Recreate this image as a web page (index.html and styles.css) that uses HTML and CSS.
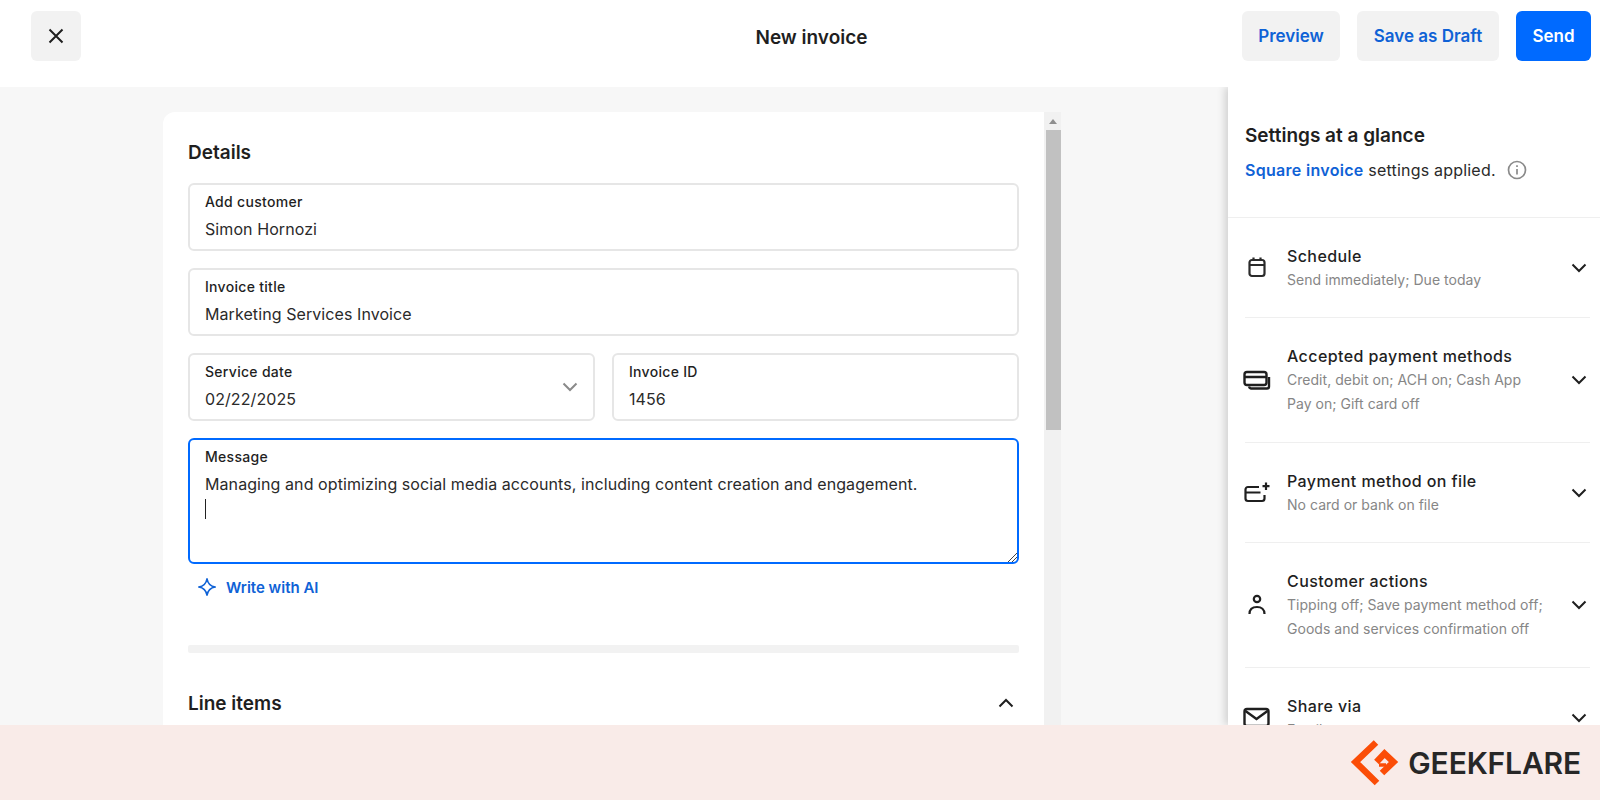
FILE: index.html
```html
<!DOCTYPE html>
<html lang="en">
<head>
<meta charset="utf-8">
<title>New invoice</title>
<link rel="stylesheet" href="styles.css">
</head>
<body>
<div class="page">
  <header class="topbar">
    <button class="btn btn-icon" aria-label="Close">
      <svg width="24" height="24" viewBox="0 0 24 24" fill="none" stroke="#1f1f1f" stroke-width="2"><path d="M5.5 5.5l13 13M18.5 5.5l-13 13"/></svg>
    </button>
    <h1 class="title">New invoice</h1>
    <div class="actions">
      <button class="btn btn-soft btn-preview">Preview</button>
      <button class="btn btn-soft btn-draft">Save as Draft</button>
      <button class="btn btn-primary">Send</button>
    </div>
  </header>

  <div class="workspace">
    <main class="main">
      <section class="card">
        <h2 class="section-title">Details</h2>
        <div class="field">
          <span class="field-label">Add customer</span>
          <span class="field-value">Simon Hornozi</span>
        </div>
        <div class="field">
          <span class="field-label">Invoice title</span>
          <span class="field-value">Marketing Services Invoice</span>
        </div>
        <div class="field-row">
          <div class="field field-select">
            <span class="field-label">Service date</span>
            <span class="field-value">02/22/2025</span>
            <svg class="select-chevron" width="18" height="12" viewBox="0 0 18 12" fill="none" stroke="#8a8a8a" stroke-width="2"><path d="M2.5 2.5L9 9l6.5-6.5"/></svg>
          </div>
          <div class="field">
            <span class="field-label">Invoice ID</span>
            <span class="field-value">1456</span>
          </div>
        </div>
        <div class="field field-message">
          <span class="field-label">Message</span>
          <span class="field-value">Managing and optimizing social media accounts, including content creation and engagement.</span>
          <span class="caret"></span>
          <svg class="resize-grip" width="10" height="10" viewBox="0 0 10 10" fill="none" stroke="#444" stroke-width="1"><path d="M1 10L10 1M5 10l5-5"/></svg>
        </div>
        <div class="ai-link">
          <svg width="20" height="20" viewBox="0 0 20 20" fill="none" stroke="#0f62d6" stroke-width="1.6" stroke-linejoin="round"><path d="M10 1.8c.8 4.6 3.4 7.4 8.2 8.2-4.800.8-7.400 3.600-8.200 8.200-.8-4.600-3.400-7.400-8.200-8.200 4.800-.8 7.400-3.600 8.200-8.200z"/></svg>
          <span>Write with AI</span>
        </div>
        <div class="section-divider"></div>
        <div class="section-head">
          <h2 class="section-title">Line items</h2>
          <svg class="collapse" width="16" height="10" viewBox="0 0 16 10" fill="none" stroke="#1f1f1f" stroke-width="2"><path d="M1.5 8.5L8 2l6.5 6.5"/></svg>
        </div>
      </section>
      <div class="scrollbar">
        <span class="scroll-arrow"></span>
        <div class="scroll-thumb"></div>
      </div>
    </main>

    <aside class="sidebar">
      <div class="side-head">
        <h2 class="side-title">Settings at a glance</h2>
        <p class="side-note"><span class="link">Square invoice</span> settings applied.<svg class="info" width="20" height="20" viewBox="0 0 20 20" fill="none" stroke="#8a8a8a" stroke-width="1.7"><circle cx="10" cy="10" r="8.5"/><path d="M10 9v5.500"/><path d="M10 5.200v1.800"/></svg></p>
      </div>
      <div class="setting">
        <svg class="setting-icon" width="28" height="24" viewBox="0 0 28 24" fill="none" stroke="#2b2b2b" stroke-width="2.2"><rect x="6.500" y="4" width="15" height="16" rx="2.500"/><path d="M6.500 9h15M10.500 1.500V5M17.500 1.500V5"/></svg>
        <div class="setting-text">
          <div class="setting-title">Schedule</div>
          <div class="setting-sub">Send immediately; Due today</div>
        </div>
        <svg class="chev" width="16" height="10" viewBox="0 0 16 10" fill="none" stroke="#1f1f1f" stroke-width="2"><path d="M1.500 1.500L8 8l6.500-6.500"/></svg>
      </div>
      <div class="setting">
        <svg class="setting-icon" width="28" height="24" viewBox="0 0 28 24" fill="none" stroke="#1f1f1f" stroke-width="2.400"><rect x="1.500" y="4" width="22" height="13" rx="2.500"/><path d="M1.500 9h22M26 9v9.500a2 2 0 0 1-2 2H8a2.500 2.500 0 0 1-2-2"/></svg>
        <div class="setting-text">
          <div class="setting-title">Accepted payment methods</div>
          <div class="setting-sub">Credit, debit on; ACH on; Cash App<br>Pay on; Gift card off</div>
        </div>
        <svg class="chev" width="16" height="10" viewBox="0 0 16 10" fill="none" stroke="#1f1f1f" stroke-width="2"><path d="M1.500 1.500L8 8l6.500-6.500"/></svg>
      </div>
      <div class="setting">
        <svg class="setting-icon" width="28" height="24" viewBox="0 0 28 24" fill="none" stroke="#1f1f1f" stroke-width="2.200"><path d="M16 6H5a2.500 2.500 0 0 0-2.500 2.500v9A2.500 2.500 0 0 0 5 20h14a2.500 2.500 0 0 0 2.500-2.500V14M2.500 11.500h15M23 1.500V9M19.500 5.200h7"/></svg>
        <div class="setting-text">
          <div class="setting-title">Payment method on file</div>
          <div class="setting-sub">No card or bank on file</div>
        </div>
        <svg class="chev" width="16" height="10" viewBox="0 0 16 10" fill="none" stroke="#1f1f1f" stroke-width="2"><path d="M1.500 1.500L8 8l6.500-6.500"/></svg>
      </div>
      <div class="setting">
        <svg class="setting-icon" width="28" height="24" viewBox="0 0 28 24" fill="none" stroke="#1f1f1f" stroke-width="2.200"><circle cx="14" cy="6" r="3.200"/><path d="M6.500 21c0-4.500 3-7 7.500-7s7.500 2.500 7.500 7"/></svg>
        <div class="setting-text">
          <div class="setting-title">Customer actions</div>
          <div class="setting-sub">Tipping off; Save payment method off;<br>Goods and services confirmation off</div>
        </div>
        <svg class="chev" width="16" height="10" viewBox="0 0 16 10" fill="none" stroke="#1f1f1f" stroke-width="2"><path d="M1.500 1.500L8 8l6.500-6.500"/></svg>
      </div>
      <div class="setting">
        <svg class="setting-icon" width="28" height="24" viewBox="0 0 28 24" fill="none" stroke="#1f1f1f" stroke-width="2.400"><rect x="1.500" y="3" width="24" height="17" rx="2.500"/><path d="M2.500 5l11 8 11-8"/></svg>
        <div class="setting-text">
          <div class="setting-title">Share via</div>
          <div class="setting-sub">Email</div>
        </div>
        <svg class="chev" width="16" height="10" viewBox="0 0 16 10" fill="none" stroke="#1f1f1f" stroke-width="2"><path d="M1.500 1.500L8 8l6.500-6.500"/></svg>
      </div>
    </aside>
  </div>

  <footer class="brandbar">
    <svg class="brand-mark" width="60" height="55" viewBox="0 0 60 55" fill="none" stroke="#fb4d07" stroke-width="6.500"><path d="M31 7.500L10.500 27 32 48"/><path d="M31.500 27L39.500 18.500 48.500 27 37 38"/><path stroke-width="3.500" d="M34 30h7"/></svg>
    <span class="brand-name">GEEKFLARE</span>
  </footer>
</div>
</body>
</html>
```
FILE: styles.css
```css
* { box-sizing: border-box; }
html, body { margin: 0; height: 100%; }
body { font-family: Inter, "Liberation Sans", sans-serif; color: #1f1f1f; background: #fff; overflow: hidden; }
h1, h2, p { margin: 0; }

.page { height: 800px; display: flex; flex-direction: column; }

.topbar { height: 87px; flex: none; background: #fff; display: flex; align-items: flex-start; padding: 11px 9px 0 31px; }
.btn { height: 50px; border: 0; border-radius: 6px; font: 600 17px/50px Inter, sans-serif; padding: 0; display: flex; align-items: center; justify-content: center; }
.btn-icon { width: 50px; background: #f2f2f2; }
.btn-soft { background: #f2f2f2; color: #0f62d6; }
.btn-preview { width: 98px; }
.btn-draft { width: 142px; }
.btn-primary { width: 75px; background: #006aff; color: #fff; }
.title { flex: 1; text-align: center; font-size: 19px; line-height: 54px; font-weight: 600; padding-left: 300px; }
.actions { display: flex; gap: 17px; }

.workspace { flex: 1; min-height: 0; display: flex; overflow: hidden; background: #f7f7f7; }

.main { flex: 1; display: flex; align-items: flex-start; padding: 25px 0 0 163px; }
.card { width: 881px; background: #fff; border-radius: 12px 0 0 0; padding: 28px 25px 40px; flex: none; }
.section-title { font-size: 19px; line-height: 26px; font-weight: 600; }

.field { position: relative; height: 68px; margin-top: 17px; border: 2px solid #e6e6e6; border-radius: 6px; padding: 5px 15px 0; display: flex; flex-direction: column; flex: 1; }
.field-label { font-size: 14px; line-height: 24px; font-weight: 500; color: #1f1f1f; letter-spacing: .3px; }
.field-value { font-size: 16px; line-height: 31px; color: #2a2a2a; letter-spacing: .08px; }
.field-row { display: flex; gap: 17px; }
.select-chevron { position: absolute; right: 14px; top: 26px; }

.field-message { height: 126px; flex: none; border-color: #006aff; }
.caret { width: 1px; height: 20px; background: #222; margin-top: -1px; }
.resize-grip { position: absolute; right: 0; bottom: 0; }

.ai-link { display: flex; align-items: center; gap: 9px; margin: 12px 0 0 9px; height: 22px; color: #0f62d6; font-size: 15px; font-weight: 600; }
.section-divider { height: 8px; background: #f2f2f2; border-radius: 2px; margin-top: 47px; }
.section-head { display: flex; justify-content: space-between; align-items: center; margin-top: 38px; padding-right: 5px; }
.collapse { margin-bottom: 2px; }

.scrollbar { width: 17px; flex: none; height: 100%; background: #f1f1f1; display: flex; flex-direction: column; align-items: flex-end; }
.scroll-arrow { width: 0; height: 0; border: 4px solid transparent; border-top: 0; border-bottom: 5px solid #8f8f8f; margin: 7px 4px 6px 0; }
.scroll-thumb { width: 15px; height: 300px; background: #c1c1c1; }

.sidebar { width: 372px; flex: none; background: #fff; box-shadow: -3px 0 8px rgba(0,0,0,.16); overflow: hidden; }
.side-head { height: 131px; padding: 36px 17px 0; border-bottom: 1px solid #efefef; }
.side-title { font-size: 19px; line-height: 26px; font-weight: 600; }
.side-note { font-size: 16px; line-height: 24px; margin-top: 9px; color: #2a2a2a; letter-spacing: .2px; }
.link { color: #0f62d6; font-weight: 600; letter-spacing: .3px; }
.info { margin-left: 11px; vertical-align: -4px; }

.setting { display: flex; align-items: center; margin: 0 10px 0 17px; padding: 26px 3px 25.4px 0; border-bottom: 1px solid #efefef; }
.setting-icon { flex: none; margin: 0 16px 0 -2px; }
.setting-text { flex: 1; }
.setting-title { font-size: 16px; line-height: 24px; font-weight: 500; color: #1f1f1f; letter-spacing: .4px; }
.setting-sub { font-size: 14px; line-height: 24px; color: #868686; letter-spacing: .03px; }
.chev { flex: none; }

.brandbar { height: 75px; flex: none; background: #f9ebe8; display: flex; justify-content: flex-end; align-items: flex-start; padding: 10px 19px 0 0; }
.brand-mark { flex: none; }
.brand-name { font-size: 30px; line-height: 38px; font-weight: 600; color: #272727; margin: 9px 0 0 3px; letter-spacing: -.15px; }
```
